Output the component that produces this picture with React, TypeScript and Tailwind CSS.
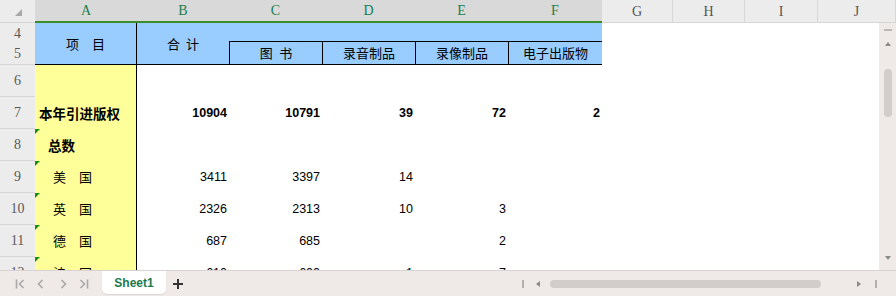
import React from 'react';

const cjk = "font-['Noto_Sans_CJK_SC',sans-serif]";
const num = "font-['Liberation_Sans',Arial,sans-serif]";
const hdr = "font-['Liberation_Serif','Times_New_Roman',serif]";

interface DataRow {
  n: number;
  a: string;
  bold?: boolean;
  pad: string;
  mark?: boolean;
  vals: string[];
}

const rows: DataRow[] = [
  { n: 6, a: '', pad: 'pl-[4px]', vals: ['', '', '', '', ''] },
  { n: 7, a: '本年引进版权', bold: true, pad: 'pl-[4px]', vals: ['10904', '10791', '39', '72', '2'] },
  { n: 8, a: '总数', bold: true, pad: 'pl-[13px]', mark: true, vals: ['', '', '', '', ''] },
  { n: 9, a: '美　国', pad: 'pl-[18px]', mark: true, vals: ['3411', '3397', '14', '', ''] },
  { n: 10, a: '英　国', pad: 'pl-[18px]', mark: true, vals: ['2326', '2313', '10', '3', ''] },
  { n: 11, a: '德　国', pad: 'pl-[18px]', mark: true, vals: ['687', '685', '', '2', ''] },
  { n: 12, a: '法　国', pad: 'pl-[18px]', mark: true, vals: ['610', '600', '1', '7', ''] },
];

const cols = 'grid-cols-[35px_102px_92px_93px_93px_93px_94px_71px_72px_73px_1fr]';

const RowHead: React.FC<{ label: number }> = ({ label }) => (
  <div
    className={`flex items-center justify-center bg-[#ececec] border-b border-[#d6d6d6] text-[14px] text-[#5a5a5a] ${hdr}`}
  >
    {label}
  </div>
);

const ColumnHeader: React.FC = () => {
  const sel = ['A', 'B', 'C', 'D', 'E', 'F'];
  const rest = ['G', 'H', 'I', 'J'];
  return (
    <div className={`grid ${cols} h-[23px]`}>
      <div className="relative bg-[#ececec] border-b border-[#d6d6d6]">
        <div className="absolute left-[15px] top-[9px] w-0 h-0 border-b-[7px] border-l-[7px] border-b-[#a8a8a8] border-l-transparent" />
      </div>
      {sel.map((c) => (
        <div
          key={c}
          className={`flex items-center justify-center bg-[#d9d9d9] border-b-2 border-[#3c8c2c] text-[14px] text-[#1a7f50] ${hdr}`}
        >
          {c}
        </div>
      ))}
      {rest.map((c) => (
        <div
          key={c}
          className={`flex items-center justify-center bg-[#ececec] border-b border-r border-[#d6d6d6] text-[14px] text-[#555] ${hdr}`}
        >
          {c}
        </div>
      ))}
    </div>
  );
};

const Mark: React.FC = () => (
  <div className="absolute left-0 top-0 w-0 h-0 border-t-[5px] border-r-[5px] border-t-[#1b8a1b] border-r-transparent" />
);

const Sheet: React.FC = () => (
  <div className={`grid ${cols} grid-rows-[19px_23px_repeat(7,32px)] flex-1 overflow-hidden bg-white text-black`}>
    {/* rows 4-5: header block */}
    <div className="row-start-1 col-start-1 grid">
      <RowHead label={4} />
    </div>
    <div className="row-start-2 col-start-1 grid">
      <RowHead label={5} />
    </div>
    <div
      className={`row-start-1 row-span-2 col-start-2 flex items-center justify-center bg-[#99ccff] border-r border-b border-black text-[13px] ${cjk}`}
    >
      项　目
    </div>
    <div
      className={`row-start-1 row-span-2 col-start-3 flex items-center justify-center bg-[#99ccff] border-b border-black text-[13px] ${cjk}`}
    >
      合&nbsp;&nbsp;计
    </div>
    <div className="row-start-1 col-start-4 col-span-4 bg-[#99ccff] border-b border-black" />
    {['图\u2002书', '录音制品', '录像制品', '电子出版物'].map((t, i) => (
      <div
        key={t}
        className={`row-start-2 flex items-center justify-center bg-[#99ccff] border-l border-b border-black text-[13px] ${cjk}`}
        style={{ gridColumnStart: i + 4 }}
      >
        {t}
      </div>
    ))}
    <div className="row-start-1 row-span-2 col-start-8 col-span-4 bg-white" />

    {rows.map((r) => (
      <React.Fragment key={r.n}>
        <RowHead label={r.n} />
        <div
          className={`relative flex items-center bg-[#ffff99] border-r border-black ${r.pad} ${cjk} ${
            r.bold ? 'font-bold text-[13.5px]' : 'text-[13px]'
          }`}
        >
          {r.mark && <Mark />}
          {r.a}
        </div>
        {r.vals.map((v, i) => (
          <div
            key={i}
            className={`flex items-center justify-end pr-[2px] text-[12.5px] ${num} ${r.bold ? 'font-bold' : ''}`}
          >
            {v}
          </div>
        ))}
        <div />
        <div />
        <div />
        <div />
      </React.Fragment>
    ))}
  </div>
);

const VScroll: React.FC = () => (
  <div className="w-[17px] flex flex-col items-center bg-[#efe9e7]">
    <div className="mt-[6px] h-[2px] w-[8px] bg-[#bdb7b6]" />
    <div className="mt-[11px] w-0 h-0 border-b-[4px] border-x-[3px] border-b-[#8a8a8a] border-x-transparent" />
    <div className="mt-[23px] h-[48px] w-[8px] rounded-full bg-[#d2cccb]" />
    <div className="flex-1" />
    <div className="mb-[10px] w-0 h-0 border-t-[4px] border-x-[3px] border-t-[#8a8a8a] border-x-transparent" />
  </div>
);

const NavIcon: React.FC<{ kind: 'first' | 'prev' | 'next' | 'last' }> = ({ kind }) => {
  const stroke = '#a9a9a9';
  if (kind === 'first')
    return (
      <svg width="10" height="10" viewBox="0 0 10 10" fill="none" stroke={stroke} strokeWidth="1.6">
        <path d="M1.5 0.5v9" />
        <path d="M8.5 1L4.5 5l4 4" />
      </svg>
    );
  if (kind === 'last')
    return (
      <svg width="10" height="10" viewBox="0 0 10 10" fill="none" stroke={stroke} strokeWidth="1.6">
        <path d="M8.5 0.5v9" />
        <path d="M1.5 1l4 4-4 4" />
      </svg>
    );
  if (kind === 'prev')
    return (
      <svg width="7" height="10" viewBox="0 0 7 10" fill="none" stroke={stroke} strokeWidth="1.6">
        <path d="M5.5 1L1.5 5l4 4" />
      </svg>
    );
  return (
    <svg width="7" height="10" viewBox="0 0 7 10" fill="none" stroke={stroke} strokeWidth="1.6">
      <path d="M1.5 1l4 4-4 4" />
    </svg>
  );
};

const BottomBar: React.FC = () => (
  <div className="flex h-[26px] items-center bg-[#efe9e7] border-t border-[#d8d3d2]">
    <div className="w-[15px]" />
    <NavIcon kind="first" />
    <div className="w-[12px]" />
    <NavIcon kind="prev" />
    <div className="w-[16px]" />
    <NavIcon kind="next" />
    <div className="w-[12px]" />
    <NavIcon kind="last" />
    <div
      className={`ml-[13px] self-start flex h-[23px] w-[64px] items-center justify-center rounded-b-[5px] bg-white shadow-[0_1px_1px_rgba(0,0,0,0.08)] text-[12px] font-bold text-[#1b7a4c] ${num}`}
    >
      Sheet1
    </div>
    <svg className="ml-[7px]" width="10" height="10" viewBox="0 0 10 10" stroke="#333" strokeWidth="2">
      <path d="M5 0v10M0 5h10" />
    </svg>
    <div className="flex-1" />
    <div className="flex w-[374px] items-center">
      <div className="h-[8px] w-[2px] bg-[#b4aeae]" />
      <div className="ml-[12px] w-0 h-0 border-r-[4px] border-y-[3px] border-r-[#8a8a8a] border-y-transparent" />
      <div className="ml-[10px] h-[8px] w-[271px] rounded-full bg-[#d2cccb]" />
      <div className="ml-[36px] w-0 h-0 border-l-[4px] border-y-[3px] border-l-[#8a8a8a] border-y-transparent" />
      <div className="ml-[14px] h-[8px] w-[2px] bg-[#b4aeae]" />
    </div>
  </div>
);

const App: React.FC = () => {
  return (
    <div className="w-[896px] h-[296px] flex flex-col overflow-hidden bg-white">
      <ColumnHeader />
      <div className="flex h-[247px]">
        <Sheet />
        <VScroll />
      </div>
      <BottomBar />
    </div>
  );
};

export default App;
